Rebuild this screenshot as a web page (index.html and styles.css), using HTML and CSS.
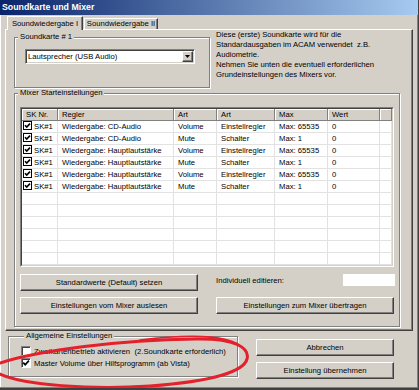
FILE: index.html
```html
<!DOCTYPE html>
<html lang="de">

<head>
    <meta charset="UTF-8">
    <meta name="viewport" content="width=device-width, initial-scale=1.0">
    <link rel="stylesheet" href="styles.css">

    <title>Soundkarte und Mixer</title>
</head>

<body>

    <div class="window">
        <div class="titlebar">Soundkarte und Mixer</div>

        <div class="tabs">
            <div class="tab tab-active">Soundwiedergabe I</div>
            <div class="tab">Soundwiedergabe II</div>
        </div>

        <div class="panel">
            <div class="top-row">
                <fieldset class="group group-card">
                    <legend>Soundkarte # 1</legend>
                    <div class="combo">
                        <span class="combo-text">Lautsprecher (USB Audio)</span>
                        <span class="combo-btn">
                            <svg width="5" height="3" viewBox="0 0 5 3"><path d="M0 0H5L2.5 3Z" fill="#000" /></svg>
                        </span>
                    </div>
                </fieldset>
                <p class="hint">
                    Diese (erste) Soundkarte wird für die<br>
                    Standardausgaben im ACAM verwendet&nbsp; z.B.<br>
                    Audiometrie.<br>
                    Nehmen Sie unten die eventuell erforderlichen<br>
                    Grundeinstellungen des Mixers vor.
                </p>
            </div>

            <fieldset class="group group-mixer">
                <legend>Mixer Starteinstellungen</legend>
                <div class="mixer-body">
                    <div class="list">
                        <table class="grid">
                            <colgroup>
                                <col style="width: 36px">
                                <col style="width: 116px">
                                <col style="width: 43px">
                                <col style="width: 58px">
                                <col style="width: 53px">
                                <col style="width: 52px">
                                <col>
                            </colgroup>
                            <thead>
                                <tr>
                                    <th>SK Nr.</th>
                                    <th>Regler</th>
                                    <th>Art</th>
                                    <th>Art</th>
                                    <th>Max</th>
                                    <th>Wert</th>
                                    <th></th>
                                </tr>
                            </thead>
                            <tbody id="mixerRows">
                                <!-- rows are filled by the script below -->
                            </tbody>
                        </table>
                    </div>

                    <div class="mixer-actions">
                        <button type="button" class="btn">Standardwerte (Default) setzen</button>
                        <div class="edit-row">
                            <span class="edit-label">Individuell editieren:</span>
                            <span class="edit-box"></span>
                        </div>
                        <button type="button" class="btn">Einstellungen vom Mixer auslesen</button>
                        <button type="button" class="btn">Einstellungen zum Mixer übertragen</button>
                    </div>
                </div>
            </fieldset>
        </div>

        <div class="bottom-row">
            <fieldset class="group group-general">
                <legend>Allgemeine Einstellungen</legend>
                <label class="check">
                    <span class="box"></span>
                    <span class="check-text">Zweikartenbetrieb aktivieren&nbsp; (2.Soundkarte erforderlich)</span>
                </label>
                <label class="check">
                    <span class="box">
                        <svg width="8" height="8" viewBox="0 0 8 8"><path d="M1.2 3.6L3.2 5.7L6.9 1.6" fill="none" stroke="#000" stroke-width="1.7" /></svg>
                    </span>
                    <span class="check-text">Master Volume über Hilfsprogramm (ab Vista)</span>
                </label>
            </fieldset>

            <div class="dialog-actions">
                <button type="button" class="btn">Abbrechen</button>
                <button type="button" class="btn">Einstellung übernehmen</button>
            </div>
        </div>

        <!-- red hand drawn marker over the general settings -->
        <svg class="marker" width="419" height="390" viewBox="0 0 419 390">
            <path d="M0 363C40 350 120 340 195 339C235 338 250 348 247 359C244 371 215 381 150 386C90 390 25 385 0 374"
                fill="none" stroke="#e3202b" stroke-width="3" stroke-linecap="round" />
            <path d="M140 340C190 334 232 335 244 349" fill="none" stroke="#e3202b" stroke-width="1.6"
                stroke-linecap="round" />
        </svg>
    </div>

    <script>
        const mixerData = [
            { sk: 'SK#1', regler: 'Wiedergabe: CD-Audio', art: 'Volume', typ: 'Einstellregler', max: 'Max: 65535', wert: '0' },
            { sk: 'SK#1', regler: 'Wiedergabe: CD-Audio', art: 'Mute', typ: 'Schalter', max: 'Max: 1', wert: '0' },
            { sk: 'SK#1', regler: 'Wiedergabe: Hauptlautstärke', art: 'Volume', typ: 'Einstellregler', max: 'Max: 65535', wert: '0' },
            { sk: 'SK#1', regler: 'Wiedergabe: Hauptlautstärke', art: 'Mute', typ: 'Schalter', max: 'Max: 1', wert: '0' },
            { sk: 'SK#1', regler: 'Wiedergabe: Hauptlautstärke', art: 'Volume', typ: 'Einstellregler', max: 'Max: 65535', wert: '0' },
            { sk: 'SK#1', regler: 'Wiedergabe: Hauptlautstärke', art: 'Mute', typ: 'Schalter', max: 'Max: 1', wert: '0' }
        ];

        const checkIcon = '<svg class="list-check" width="9" height="9" viewBox="0 0 9 9">' +
            '<rect x="0.5" y="0.5" width="8" height="8" fill="#fff" stroke="#000" />' +
            '<path d="M2 4.3L3.7 6.1L7 2.6" fill="none" stroke="#000" stroke-width="1.6" /></svg>';

        function populateTable() {
            const tableBody = document.getElementById('mixerRows');
            tableBody.innerHTML = '';

            mixerData.forEach(item => {
                const row = document.createElement('tr');
                row.innerHTML = `
          <td class="sk-cell">${checkIcon}<span>${item.sk}</span></td>
          <td>${item.regler}</td>
          <td>${item.art}</td>
          <td>${item.typ}</td>
          <td>${item.max}</td>
          <td>${item.wert}</td>
          <td></td>
        `;
                tableBody.appendChild(row);
            });

            // empty lines down to the bottom of the list
            for (let i = 0; i < 6; i++) {
                const row = document.createElement('tr');
                row.innerHTML = '<td></td><td></td><td></td><td></td><td></td><td></td><td></td>';
                tableBody.appendChild(row);
            }
        }

        populateTable();
    </script>

</body>

</html>
```

FILE: styles.css
```css
* {
    box-sizing: border-box;
}

body {
    margin: 0;
    background-color: #d4d0c8;
    font-family: "Liberation Sans", Arial, sans-serif;
    font-size: 7.7px;
    color: #000;
}

.window {
    position: relative;
    width: 419px;
    height: 390px;
    background-color: #d4d0c8;
    border-right: 1px solid #404040;
    border-bottom: 2px solid #404040;
    box-shadow: inset -1px -1px 0 #808080, inset 1px 0 0 #fff;
    overflow: hidden;
}

.titlebar {
    height: 15px;
    padding-left: 2px;
    line-height: 15px;
    font-size: 8.8px;
    font-weight: bold;
    color: #fff;
    background: linear-gradient(to right, #0a246a, #a6caf0);
}

/* tab strip */
.tabs {
    position: relative;
    z-index: 1;
    display: flex;
    align-items: flex-end;
    height: 14px;
    margin-top: 1px;
    padding-left: 7px;
}

.tab {
    width: 74px;
    height: 11px;
    margin-bottom: 1px;
    margin-left: 1px;
    border: 1px solid;
    border-color: #fff #404040 transparent #fff;
    border-bottom: none;
    box-shadow: inset -1px 0 0 #808080;
    text-align: center;
    line-height: 10px;
}

.tab-active {
    width: 76px;
    height: 14px;
    margin: 0;
    background-color: #d4d0c8;
    line-height: 13px;
}

.panel {
    width: 408px;
    margin: -1px 0 0 5px;
    padding: 0 0 3px 8px;
    border: 1px solid;
    border-color: #fff #404040 #404040 #fff;
    box-shadow: inset -1px -1px 0 #808080;
}

.top-row {
    display: flex;
    align-items: flex-start;
    height: 58px;
}

/* group boxes */
.group {
    margin: 0;
    padding: 0;
    min-width: 0;
    border: 1px solid #808080;
    box-shadow: 1px 1px 0 #fff, inset 1px 1px 0 #fff;
}

.group legend {
    margin-left: 3px;
    padding: 0 2px;
    line-height: 10px;
    background-color: #d4d0c8;
}

.group-card {
    width: 196px;
    height: 56px;
    margin-top: 2px;
    padding-top: 7px;
}

.combo {
    display: flex;
    align-items: center;
    justify-content: space-between;
    width: 170px;
    height: 15px;
    margin-left: 10px;
    padding: 0 1px 0 2px;
    background-color: #fff;
    border: 1px solid;
    border-color: #808080 #fff #fff #808080;
    box-shadow: inset 1px 1px 0 #404040, inset -1px -1px 0 #d4d0c8;
}

.combo-btn {
    display: flex;
    align-items: center;
    justify-content: center;
    width: 11px;
    height: 11px;
    background-color: #d4d0c8;
    border: 1px solid;
    border-color: #fff #404040 #404040 #fff;
    box-shadow: inset -1px -1px 0 #808080;
}

.hint {
    margin: 0 0 0 6px;
    line-height: 10px;
}

.group-mixer {
    width: 386px;
    height: 239px;
    padding-top: 9px;
}

.mixer-body {
    padding: 0 5px;
}

/* list view */
.list {
    width: 374px;
    height: 160px;
    background-color: #fff;
    border: 1px solid;
    border-color: #808080 #fff #fff #808080;
    overflow: hidden;
}

.grid {
    width: 100%;
    border: 1px solid;
    border-color: #404040 #d4d0c8 #d4d0c8 #404040;
    border-spacing: 0;
    table-layout: fixed;
    background-color: #fff;
}

.grid th {
    height: 12px;
    padding: 0 0 0 4px;
    font-weight: normal;
    text-align: left;
    line-height: 11px;
    background-color: #d4d0c8;
    border-right: 1px solid #808080;
    border-bottom: 1px solid #808080;
    box-shadow: inset 1px 1px 0 #fff;
    white-space: nowrap;
    overflow: hidden;
}

.grid td {
    height: 12px;
    padding: 0 0 0 4px;
    line-height: 11px;
    border-right: 1px solid #e2e2e2;
    border-bottom: 1px solid #e2e2e2;
    white-space: nowrap;
    overflow: hidden;
}

.grid td.sk-cell {
    padding-left: 1px;
}

.list-check {
    vertical-align: -1px;
    margin-right: 2px;
}

.mixer-actions {
    display: grid;
    grid-template-columns: 178px 178px;
    column-gap: 18px;
    row-gap: 6px;
    margin-top: 7px;
}

.btn {
    display: block;
    width: 100%;
    height: 17px;
    padding: 0;
    font: inherit;
    color: #000;
    text-align: center;
    background-color: #d4d0c8;
    border: 1px solid;
    border-color: #fff #404040 #404040 #fff;
    box-shadow: inset -1px -1px 0 #808080;
}

.edit-row {
    display: flex;
    justify-content: space-between;
    align-items: flex-start;
}

.edit-label {
    margin-top: 1px;
    line-height: 12px;
}

.edit-box {
    width: 52px;
    height: 12px;
    margin-right: -1px;
    background-color: #fff;
}

/* lower part of the dialog */
.bottom-row {
    display: flex;
    align-items: flex-start;
    padding-left: 8px;
}

.group-general {
    width: 230px;
    height: 46px;
    padding: 4px 0 0 12px;
}

.check {
    display: flex;
    align-items: center;
    height: 12px;
    white-space: nowrap;
    overflow: hidden;
}

.box {
    display: flex;
    align-items: center;
    justify-content: center;
    flex: none;
    width: 10px;
    height: 10px;
    margin-right: 3px;
    background-color: #fff;
    border: 1px solid;
    border-color: #808080 #fff #fff #808080;
    box-shadow: inset 1px 1px 0 #404040;
}

.dialog-actions {
    display: flex;
    flex-direction: column;
    gap: 6px;
    width: 138px;
    margin: 8px 0 0 18px;
}

.marker {
    position: absolute;
    top: 0;
    left: 0;
    pointer-events: none;
}
```
